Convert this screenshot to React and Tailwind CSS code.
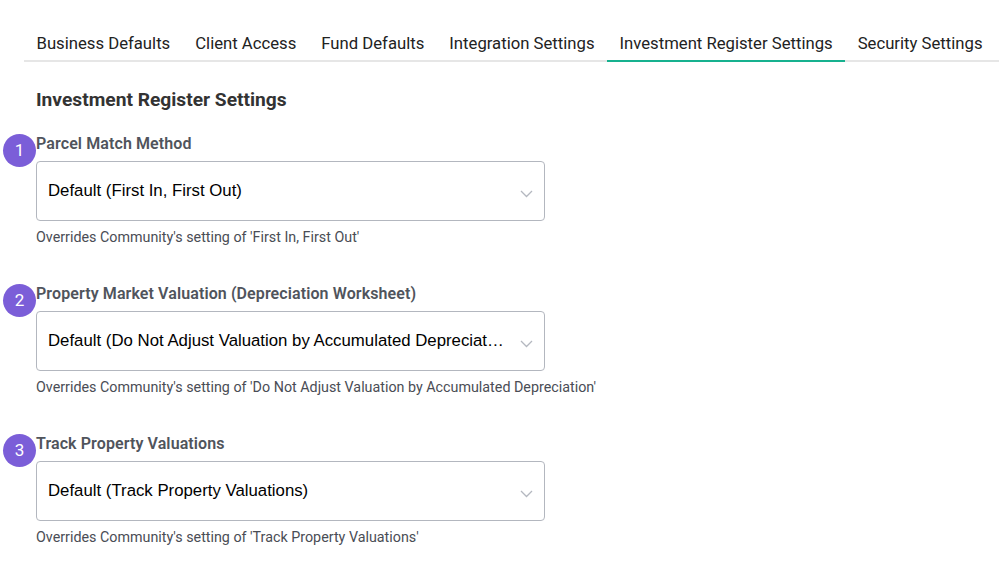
import React from 'react';

const tabs = [
  'Business Defaults',
  'Client Access',
  'Fund Defaults',
  'Integration Settings',
  'Investment Register Settings',
  'Security Settings',
];

const settings = [
  {
    n: 1,
    label: 'Parcel Match Method',
    value: 'Default (First In, First Out)',
    help: "Overrides Community's setting of 'First In, First Out'",
  },
  {
    n: 2,
    label: 'Property Market Valuation (Depreciation Worksheet)',
    value: 'Default (Do Not Adjust Valuation by Accumulated Depreciation)',
    help: "Overrides Community's setting of 'Do Not Adjust Valuation by Accumulated Depreciation'",
  },
  {
    n: 3,
    label: 'Track Property Valuations',
    value: 'Default (Track Property Valuations)',
    help: "Overrides Community's setting of 'Track Property Valuations'",
  },
];

function Chevron() {
  return (
    <svg width="13" height="8" viewBox="0 0 13 8" fill="none" className="mt-[6px] shrink-0">
      <path d="M1 1l5.5 5.5L12 1" stroke="#b4b8c0" strokeWidth="1.3" />
    </svg>
  );
}

function Setting({ n, label, value, help }) {
  return (
    <div className="relative mb-[35px]">
      <div className="absolute left-[-33px] top-[2px] w-[33px] h-[33px] rounded-full bg-[#7b5ed8] flex items-center justify-center text-white text-[17px] font-['Roboto',sans-serif]">
        {n}
      </div>
      <div className="text-[16px] leading-6 font-semibold tracking-[0.1px] text-[#50545c] font-['Roboto',sans-serif]">
        {label}
      </div>
      <div className="mt-[5px] w-[509px] h-[60px] border border-[#b3b7bf] rounded-[4px] bg-white flex items-center pl-[11px] pr-[11px]">
        <div className="flex-1 truncate pr-[14px] text-[16.8px] text-black font-['Liberation_Sans',Arial,sans-serif]">
          {value}
        </div>
        <Chevron />
      </div>
      <div className="mt-[6px] text-[14.3px] leading-5 text-[#4a4d55] font-['Roboto',sans-serif]">
        {help}
      </div>
    </div>
  );
}

export default function App() {
  return (
    <div className="w-[999px] h-[576px] bg-white overflow-hidden font-['Roboto',sans-serif]">
      <div className="ml-6 pt-[21px] flex border-b-2 border-[#e6e6e6]">
        {tabs.map((t) => (
          <div
            key={t}
            className={
              t === 'Investment Register Settings'
                ? 'px-[12.5px] pt-[11px] pb-[4px] leading-6 text-[16.7px] text-[#222] whitespace-nowrap border-b-2 border-[#17b18f] -mb-[2px]'
                : 'px-[12.5px] pt-[11px] pb-[4px] leading-6 text-[16.7px] text-[#222] whitespace-nowrap'
            }
          >
            {t}
          </div>
        ))}
      </div>
      <div className="pl-9">
        <h2 className="mt-[24px] text-[19.2px] leading-7 font-bold text-[#333]">
          Investment Register Settings
        </h2>
        <div className="mt-[18px]">
          {settings.map((s) => (
            <Setting key={s.n} {...s} />
          ))}
        </div>
      </div>
    </div>
  );
}
